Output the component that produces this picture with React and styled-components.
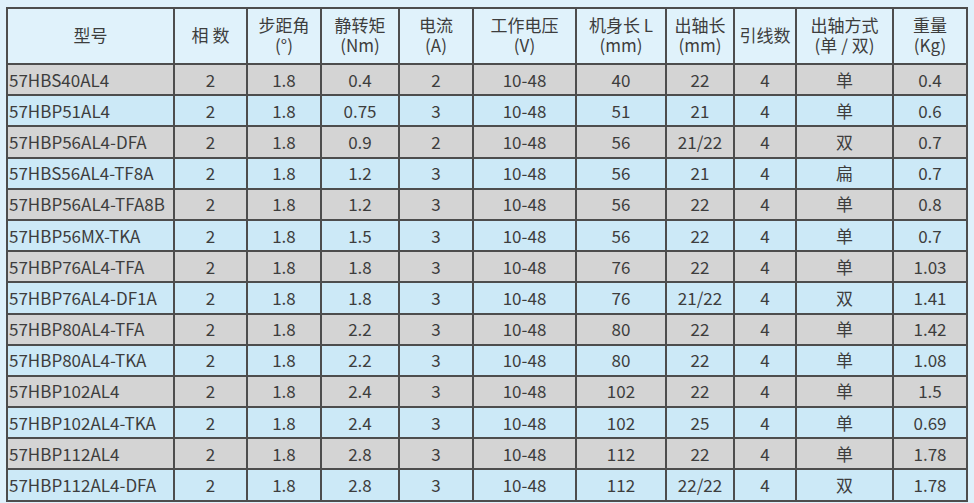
import React from 'react';
import styled, { createGlobalStyle } from 'styled-components';

const GlobalStyle = createGlobalStyle`
  html, body {
    margin: 0;
    padding: 0;
    background: #dff1fb;
  }
  body {
    font-family: "Noto Sans CJK SC", "Noto Sans", sans-serif;
    color: #3d3d3d;
  }
`;

const columns = [
  { label: ['型号'], width: 167 },
  { label: ['相 数'], width: 73 },
  { label: ['步距角', '(°)'], width: 74 },
  { label: ['静转矩', '(Nm)'], width: 78 },
  { label: ['电流', '(A)'], width: 74 },
  { label: ['工作电压', '(V)'], width: 103 },
  { label: ['机身长 L', '(mm)'], width: 90 },
  { label: ['出轴长', '(mm)'], width: 68 },
  { label: ['引线数'], width: 62 },
  { label: ['出轴方式', '(单 / 双)'], width: 97 },
  { label: ['重量', '(Kg)'], width: 74 },
];

const rows = [
  ['57HBS40AL4', '2', '1.8', '0.4', '2', '10-48', '40', '22', '4', '单', '0.4'],
  ['57HBP51AL4', '2', '1.8', '0.75', '3', '10-48', '51', '21', '4', '单', '0.6'],
  ['57HBP56AL4-DFA', '2', '1.8', '0.9', '2', '10-48', '56', '21/22', '4', '双', '0.7'],
  ['57HBS56AL4-TF8A', '2', '1.8', '1.2', '3', '10-48', '56', '21', '4', '扁', '0.7'],
  ['57HBP56AL4-TFA8B', '2', '1.8', '1.2', '3', '10-48', '56', '22', '4', '单', '0.8'],
  ['57HBP56MX-TKA', '2', '1.8', '1.5', '3', '10-48', '56', '22', '4', '单', '0.7'],
  ['57HBP76AL4-TFA', '2', '1.8', '1.8', '3', '10-48', '76', '22', '4', '单', '1.03'],
  ['57HBP76AL4-DF1A', '2', '1.8', '1.8', '3', '10-48', '76', '21/22', '4', '双', '1.41'],
  ['57HBP80AL4-TFA', '2', '1.8', '2.2', '3', '10-48', '80', '22', '4', '单', '1.42'],
  ['57HBP80AL4-TKA', '2', '1.8', '2.2', '3', '10-48', '80', '22', '4', '单', '1.08'],
  ['57HBP102AL4', '2', '1.8', '2.4', '3', '10-48', '102', '22', '4', '单', '1.5'],
  ['57HBP102AL4-TKA', '2', '1.8', '2.4', '3', '10-48', '102', '25', '4', '单', '0.69'],
  ['57HBP112AL4', '2', '1.8', '2.8', '3', '10-48', '112', '22', '4', '单', '1.78'],
  ['57HBP112AL4-DFA', '2', '1.8', '2.8', '3', '10-48', '112', '22/22', '4', '双', '1.78'],
];

export default function App() {
  return (
    <>
      <GlobalStyle />
      <Page>
        <SpecTable>
          <colgroup>
            {columns.map((c, i) => (
              <col key={i} style={{ width: c.width }} />
            ))}
          </colgroup>
          <thead>
            <tr>
              {columns.map((c, i) => (
                <HeadCell key={i}>
                  {c.label.map((line, j) => (
                    <HeadLine key={j}>{line}</HeadLine>
                  ))}
                </HeadCell>
              ))}
            </tr>
          </thead>
          <tbody>
            {rows.map((r, i) => (
              <Row key={i} $gray={i % 2 === 0}>
                {r.map((v, j) => (
                  <Cell key={j} $left={j === 0}>
                    {v}
                  </Cell>
                ))}
              </Row>
            ))}
          </tbody>
        </SpecTable>
      </Page>
    </>
  );
}

const Page = styled.div`
  padding: 7px 0 0 6px;
  width: 974px;
  height: 503px;
  box-sizing: border-box;
  overflow: hidden;
`;

const SpecTable = styled.table`
  border-collapse: collapse;
  table-layout: fixed;
  width: 960px;
  border: 2px solid #4d4d4d;
`;

const HeadCell = styled.th`
  height: 52px;
  padding: 0 0 2px;
  background: #e0f2fb;
  border: 2px solid #4d4d4d;
  font-weight: 400;
  font-size: 17px;
  line-height: 20px;
  color: #3d3d3d;
  text-align: center;
  vertical-align: middle;
`;

const HeadLine = styled.div`
  white-space: nowrap;
`;

const Row = styled.tr`
  height: 31.2px;
  background: ${props => (props.$gray ? '#d4d4d4' : '#cce9f7')};
`;

const Cell = styled.td`
  padding: 0 0 0 ${props => (props.$left ? '1px' : '0')};
  border: 2px solid #4d4d4d;
  font-size: 17px;
  line-height: 20px;
  text-align: ${props => (props.$left ? 'left' : 'center')};
  white-space: nowrap;
  overflow: hidden;
`;
